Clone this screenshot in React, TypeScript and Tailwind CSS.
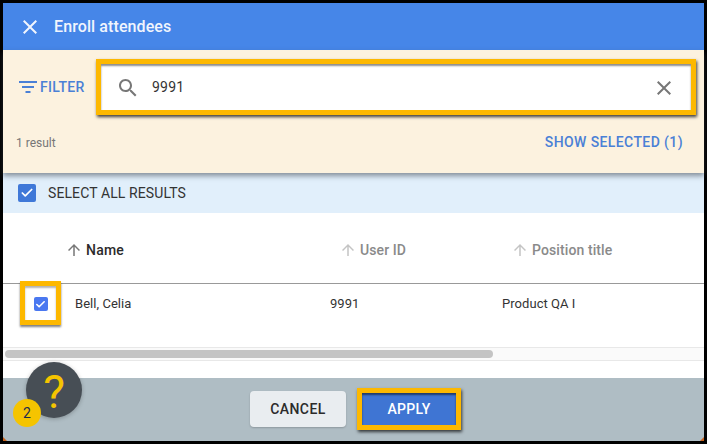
import React from "react";
import { Check } from "lucide-react";

const closePath = "M19 6.41L17.59 5 12 10.59 6.41 5 5 6.41 10.59 12 5 17.59 6.41 19 12 13.41 17.59 19 19 17.59 13.41 12z";
const searchPath =
  "M15.5 14h-.79l-.28-.27C15.41 12.59 16 11.11 16 9.5 16 5.91 13.09 3 9.5 3S3 5.91 3 9.5 5.91 16 9.5 16c1.61 0 3.09-.59 4.23-1.57l.27.28v.79l5 4.99L20.49 19l-4.99-5zm-6 0C7.01 14 5 11.99 5 9.5S7.01 5 9.5 5 14 7.01 14 9.5 11.99 14 9.5 14z";
const arrowPath = "M4 12l1.41 1.41L11 7.83V20h2V7.83l5.58 5.59L20 12l-8-8-8 8z";

function Glyph({ d, size, className }: { d: string; size: number; className: string }) {
  return (
    <svg width={size} height={size} viewBox="0 0 24 24" fill="currentColor" className={`shrink-0 ${className}`}>
      <path d={d} />
    </svg>
  );
}

function FilterIcon() {
  return (
    <svg width="18" height="12" viewBox="0 0 18 12" className="shrink-0">
      <path d="M0 1h18M3 6h12M6.500 11h5" stroke="#4a80d6" strokeWidth="2" fill="none" />
    </svg>
  );
}

function ColumnHead({ label, className, strong }: { label: string; className: string; strong?: boolean }) {
  return (
    <div className={`flex items-center gap-[3px] ${className}`}>
      <Glyph d={arrowPath} size={18} className={strong ? "text-[#777]" : "text-[#c4c4c4]"} />
      <span className={strong ? "font-medium tracking-[0.2px] text-[#2b2b2b]" : "font-medium tracking-[0.1px] text-[#8a8a8a]"}>{label}</span>
    </div>
  );
}

export default function App() {
  return (
    <div className="w-[707px] h-[444px] bg-black p-[3px] font-['Roboto',sans-serif] overflow-hidden">
      <div className="relative w-[701px] h-[438px] bg-white flex flex-col">
        {/* header */}
        <div className="h-[47px] shrink-0 bg-[#4686e8] flex items-center pl-[15px] gap-[12px] text-[#f1f5fd]">
          <Glyph d={closePath} size={24} className="" />
          <span className="text-[16px] font-medium tracking-[0.1px]">Enroll attendees</span>
        </div>

        {/* filter band */}
        <div className="relative z-10 h-[123px] shrink-0 bg-[#fcf2df] shadow-[0_3px_5px_rgba(60,70,80,0.55)] pl-[13px] pr-[8px] pt-[9px]">
          <div className="flex items-center">
            <button className="flex items-center gap-[3px] w-[80px] shrink-0 text-[14px] font-medium tracking-[0.3px] text-[#4a80d6] ml-[3px] -mr-[3px]">
              <FilterIcon />
              FILTER
            </button>
            <div className="w-[600px] shrink-0 h-[56px] border-[5px] border-[#fdb800] bg-white shadow-[1px_2px_3px_rgba(0,0,0,0.75),inset_0_2px_2px_rgba(0,0,0,0.45)] flex items-center pl-[15px] pr-[15px] pt-[1px]">
              <Glyph d={searchPath} size={24} className="text-[#777]" />
              <span className="ml-[12px] text-[14px] text-[#333] flex-1 tracking-[0.2px]">9991</span>
              <Glyph d={closePath} size={24} className="text-[#777]" />
            </div>
          </div>
          <div className="flex items-center justify-between mt-[17px] pr-[13px]">
            <span className="text-[12px] text-[#777]">1 result</span>
            <span className="text-[14px] font-medium text-[#4a80d6] tracking-[0.4px]">SHOW SELECTED (1)</span>
          </div>
        </div>

        {/* select all */}
        <div className="h-[40px] shrink-0 bg-[#e1effb] flex items-center pl-[15px] gap-[12px]">
          <span className="w-[18px] h-[18px] rounded-[2px] bg-[#3f78d8] flex items-center justify-center">
            <Check size={14} strokeWidth={3} className="text-white" />
          </span>
          <span className="text-[14px] tracking-[0.1px] text-[#333]">SELECT ALL RESULTS</span>
        </div>

        {/* table head */}
        <div className="h-[71px] shrink-0 border-b border-[#999] flex items-center text-[14px] pt-[4px]">
          <ColumnHead label="Name" strong className="ml-[62px] w-[274px]" />
          <ColumnHead label="User ID" className="w-[172px]" />
          <ColumnHead label="Position title" />
        </div>

        {/* row */}
        <div className="relative h-[63px] shrink-0 flex items-center text-[13px] tracking-[0.05px] text-[#333] pb-[24px]">
          <div className="absolute left-[17px] top-[-3px] w-[41px] h-[44px] border-[5px] border-[#fdb800] shadow-[0_2px_2px_rgba(0,0,0,0.5),inset_0_2px_2px_rgba(0,0,0,0.3)] flex items-center justify-center pt-[2px]">
            <span className="w-[14px] h-[14px] rounded-[2px] bg-[#4a78f0] flex items-center justify-center">
              <Check size={11} strokeWidth={3.5} className="text-white" />
            </span>
          </div>
          <span className="ml-[72px] w-[255px]">Bell, Celia</span>
          <span className="w-[172px]">9991</span>
          <span>Product QA I</span>
        </div>

        {/* scrollbar */}
        <div className="h-[14px] shrink-0 bg-[#fafafa] border-y border-[#e8e8e8] flex items-center pl-[2px]">
          <div className="w-[488px] h-[8px] rounded-full bg-[#c4c4c4]" />
        </div>
        <div className="flex-1" />

        {/* footer */}
        <div className="h-[63px] shrink-0 bg-[#afbdc4] flex items-center justify-center gap-[11px] pl-[4px] pb-[1px]">
          <button className="w-[96px] h-[36px] rounded-[4px] bg-[#e9edf0] text-[14px] font-medium tracking-[0.4px] text-[#2b2b2b] shadow-[0_1px_2px_rgba(0,0,0,0.2)]">
            CANCEL
          </button>
          <button className="w-[104px] h-[42px] border-[5px] border-[#fdb800] bg-[#3f75d3] text-[14px] font-medium tracking-[0.3px] text-white shadow-[1px_2px_3px_rgba(0,0,0,0.7),inset_0_2px_2px_rgba(0,0,0,0.5)]">
            APPLY
          </button>
        </div>

        {/* help bubble */}
        <div className="absolute left-[23px] top-[359px] w-[56px] h-[56px] rounded-full bg-[#474e55] shadow-[0_1px_4px_rgba(0,0,0,0.25)] flex items-center justify-center pt-[4px]">
          <span className="text-[46px] leading-none text-[#f5c400]">?</span>
        </div>
        <div className="absolute left-[10px] top-[396px] w-[28px] h-[28px] rounded-full bg-[#f5c400] flex items-center justify-center text-[14px] text-[#1d2c4d]">
          2
        </div>

        {/* orange desktop peeking through the window corners */}
        <svg width="4" height="4" viewBox="0 0 4 4" className="absolute left-0 bottom-0">
          <path d="M0 0L4 4H0z" fill="#c8621c" />
        </svg>
        <svg width="4" height="4" viewBox="0 0 4 4" className="absolute right-0 bottom-0">
          <path d="M4 0L0 4H4z" fill="#c8621c" />
        </svg>
      </div>
    </div>
  );
}
